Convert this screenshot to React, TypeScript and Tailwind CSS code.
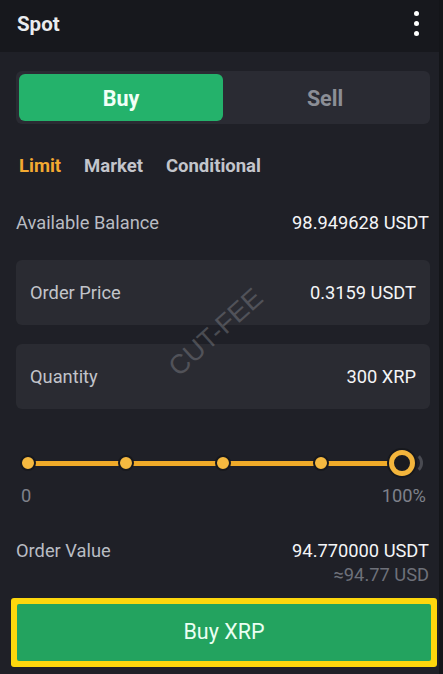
import React from "react";

export default function App() {
  const dots = [0, 25, 50, 75];
  return (
    <div
      className="relative w-[443px] h-[674px] overflow-hidden bg-[#1f2027] text-white"
      style={{ fontFamily: "Roboto, 'Noto Sans', sans-serif" }}
    >
      <div className="flex h-full">
        <div className="flex-1 flex flex-col">
          {/* Header */}
          <div className="h-[52px] bg-[#17181d] flex items-start justify-between pl-[17px] pr-[20px] pt-[10px]">
            <span className="text-[20.5px] font-bold text-[#eaecef] leading-[28px]">Spot</span>
            <div className="flex flex-col gap-[5px] items-center pt-[1px]">
              <span className="w-[5px] h-[5px] rounded-full bg-white" />
              <span className="w-[5px] h-[5px] rounded-full bg-white" />
              <span className="w-[5px] h-[5px] rounded-full bg-white" />
            </div>
          </div>

          {/* Buy/Sell toggle */}
          <div className="mt-[19px] ml-[16px] mr-[9px] h-[53px] rounded-[6px] bg-[#2a2b33] p-[3px] flex">
            <div className="w-[204px] rounded-[6px] bg-[#24b26b] flex items-center justify-center pt-[4px] text-[21.5px] font-bold text-[#f1fff6]">
              Buy
            </div>
            <div className="flex-1 flex items-center justify-center pt-[4px] text-[21.5px] font-bold text-[#8b8e96]">
              Sell
            </div>
          </div>

          {/* Order types */}
          <div className="mt-[30px] ml-[19px] flex gap-[23px] text-[18.5px] font-bold leading-[24px]">
            <span className="text-[#f3a931]">Limit</span>
            <span className="text-[#c3c5cb]">Market</span>
            <span className="text-[#c3c5cb]">Conditional</span>
          </div>

          {/* Available balance */}
          <div className="mt-[33px] ml-[16px] mr-[10px] flex justify-between text-[18.3px] leading-[24px]">
            <span className="text-[#b9bcc3]">Available Balance</span>
            <span className="text-[#f4f5f7]">98.949628 USDT</span>
          </div>

          {/* Order price */}
          <div className="mt-[25px] ml-[16px] mr-[9px] h-[65px] rounded-[6px] bg-[#2a2b32] flex items-center justify-between px-[14px] text-[18.3px]">
            <span className="text-[#c2c4ca]">Order Price</span>
            <span className="text-[#f4f5f7]">0.3159 USDT</span>
          </div>

          {/* Quantity */}
          <div className="mt-[19px] ml-[16px] mr-[9px] h-[65px] rounded-[6px] bg-[#2a2b32] flex items-center justify-between px-[14px] text-[18.3px]">
            <span className="text-[#c2c4ca]">Quantity</span>
            <span className="text-[#f4f5f7]">300 XRP</span>
          </div>

          {/* Slider */}
          <div className="mt-[39px] ml-[20px] mr-[9px] relative h-[30px]">
            <div className="absolute left-[8px] w-[370px] top-[13px] h-[5px] bg-[#efaa29]" />
            {dots.map((d, i) => (
              <span
                key={d}
                className="absolute top-[7px] w-[16px] h-[16px] rounded-full bg-[#f5b940] border-[2px] border-[#17181d]"
                style={{ left: `${i * 97.6}px` }}
              />
            ))}
            <span className="absolute left-[381px] top-[4px] w-[22px] h-[22px] rounded-full border-[3px] border-transparent border-r-[#4a4b52]" />
            <span className="absolute left-[369px] top-[2px] w-[26px] h-[26px] rounded-full bg-[#1a1b20] border-[5px] border-[#f3b53c] shadow-[0_0_0_2px_#17181d]" />
          </div>
          <div className="mt-[6px] ml-[21px] mr-[13px] flex justify-between text-[18.3px] text-[#7e818a] leading-[24px]">
            <span>0</span>
            <span>100%</span>
          </div>

          {/* Order value */}
          <div className="mt-[31px] ml-[16px] mr-[10px] flex justify-between text-[18.3px] leading-[24px]">
            <span className="text-[#b9bcc3]">Order Value</span>
            <span className="text-[#f4f5f7]">94.770000 USDT</span>
          </div>
          <div className="ml-[16px] mr-[10px] flex justify-end text-[18.3px] leading-[24px] text-[#6e717a]">
            <span>≈94.77 USD</span>
          </div>

          {/* Buy button */}
          <div className="mt-[11px] ml-[11px] mr-[2px] h-[69px] rounded-[3px] bg-[#fdd70d] p-[6px]">
            <div className="h-full rounded-[2px] bg-[#23a35f] flex items-center justify-center text-[21.5px] text-[#eafff2]">
              Buy XRP
            </div>
          </div>
        </div>
        <div className="w-[4px] bg-[#141519]" />
      </div>

      {/* Watermark */}
      <div
        className="absolute left-[158px] top-[312px] -rotate-[42deg] text-[27px] text-[#8c8e94] opacity-40 pointer-events-none"
        style={{ fontFamily: "'Liberation Sans', Arial, sans-serif" }}
      >
        CUT-FEE
      </div>
    </div>
  );
}
